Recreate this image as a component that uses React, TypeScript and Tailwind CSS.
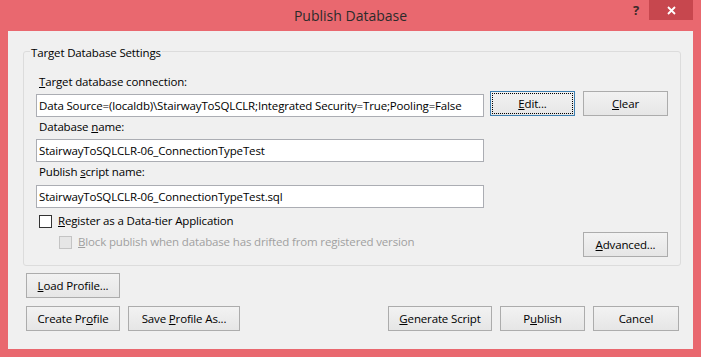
import type { ReactNode } from "react";

function Btn({ className = "", focus = false, children }: { className?: string; focus?: boolean; children: ReactNode }) {
  return (
    <button
      type="button"
      className={`h-[25px] shrink-0 border text-[11.5px] tracking-[-0.15px] leading-[16px] text-black bg-linear-to-b from-[#f2f2f2] to-[#e6e6e6] ${
        focus ? "border-[#3c7fb1] outline-1 outline-dotted outline-black -outline-offset-3" : "border-[#acacac]"
      } ${className}`}
    >
      {children}
    </button>
  );
}

function TextBox({ value, className = "" }: { value: string; className?: string }) {
  return (
    <div className={`h-[23px] shrink-0 border border-[#abadb3] bg-white pl-[2px] flex items-center whitespace-nowrap overflow-hidden ${className}`}>
      {value}
    </div>
  );
}

export default function App() {
  return (
    <div className="w-[701px] h-[357px] bg-[#e9686f] flex flex-col px-[8px] pb-[8px] font-['Open_Sans',sans-serif] text-[11.5px] tracking-[-0.15px] leading-[16px] text-black">
      {/* title bar */}
      <div className="h-[31px] shrink-0 relative">
        <div className="text-center text-[14px] tracking-normal leading-[20px] pt-[6px] text-[#2b2b2b]">Publish Database</div>
        <div className="absolute top-0 right-[44px] w-[26px] h-[20px] flex items-center justify-center text-[13px] font-bold text-[#3a2a2a]">?</div>
        <div className="absolute top-0 right-0 w-[44px] h-[20px] bg-[#c7474e] flex items-center justify-center">
          <svg width="9" height="9" viewBox="0 0 9 9">
            <path d="M1 1L8 8M8 1L1 8" stroke="#fff" strokeWidth="1.8" />
          </svg>
        </div>
      </div>

      {/* client area */}
      <div className="flex-1 bg-[#f0f0f0] flex flex-col pt-[20px] pl-[15px] pr-[12px]">
        <div className="border border-[#dcdcdc] rounded-[3px] flex flex-col px-[12px] pb-[8px]">
          <span className="-mt-[7px] -ml-[6px] self-start px-[1px] bg-[#f0f0f0]">Target Database Settings</span>

          <span className="mt-[13px] ml-[3px]">
            <span className="underline">T</span>arget database connection:
          </span>
          <div className="mt-[1px] flex items-start">
            <TextBox className="mt-[3px] w-[448px]" value="Data Source=(localdb)\StairwayToSQLCLR;Integrated Security=True;Pooling=False" />
            <Btn focus className="ml-[6px] w-[85px]">
              <span className="underline">E</span>dit...
            </Btn>
            <Btn className="ml-[8px] w-[85px]">
              <span className="underline">C</span>lear
            </Btn>
          </div>

          <span className="mt-[2px] ml-[3px]">
            Database <span className="underline">n</span>ame:
          </span>
          <TextBox className="mt-[4px] w-[448px]" value="StairwayToSQLCLR-06_ConnectionTypeTest" />

          <span className="mt-[2px] ml-[3px]">
            Publish <span className="underline">s</span>cript name:
          </span>
          <TextBox className="mt-[5px] w-[448px]" value="StairwayToSQLCLR-06_ConnectionTypeTest.sql" />

          <div className="mt-[5px] ml-[3px] h-[16px] flex items-center">
            <div className="w-[13px] h-[13px] border border-[#333333] bg-white" />
            <span className="ml-[6px]">
              <span className="underline">R</span>egister as a Data-tier Application
            </span>
          </div>

          <div className="mt-[3px] flex items-start">
            <div className="mt-[2px] ml-[23px] h-[16px] flex items-center text-[#a0a0a0]">
              <div className="w-[13px] h-[13px] border border-[#c4c4c4] bg-[#e6e6e6]" />
              <span className="ml-[6px]">
                <span className="underline">B</span>lock publish when database has drifted from registered version
              </span>
            </div>
            <div className="flex-1" />
            <Btn className="w-[85px]">
              <span className="underline">A</span>dvanced...
            </Btn>
          </div>
        </div>

        <div className="mt-[7px] ml-[3px] flex">
          <Btn className="w-[94px]">
            <span className="underline">L</span>oad Profile...
          </Btn>
        </div>

        <div className="mt-[8px] ml-[3px] mr-[2px] flex">
          <Btn className="w-[94px]">
            Create Pr<span className="underline">o</span>file
          </Btn>
          <Btn className="ml-[8px] w-[112px]">
            Save <span className="underline">P</span>rofile As...
          </Btn>
          <div className="flex-1" />
          <Btn className="w-[104px]">
            <span className="underline">G</span>enerate Script
          </Btn>
          <Btn className="ml-[8px] w-[85px]">
            P<span className="underline">u</span>blish
          </Btn>
          <Btn className="ml-[8px] w-[86px]">Cancel</Btn>
        </div>
      </div>
    </div>
  );
}
